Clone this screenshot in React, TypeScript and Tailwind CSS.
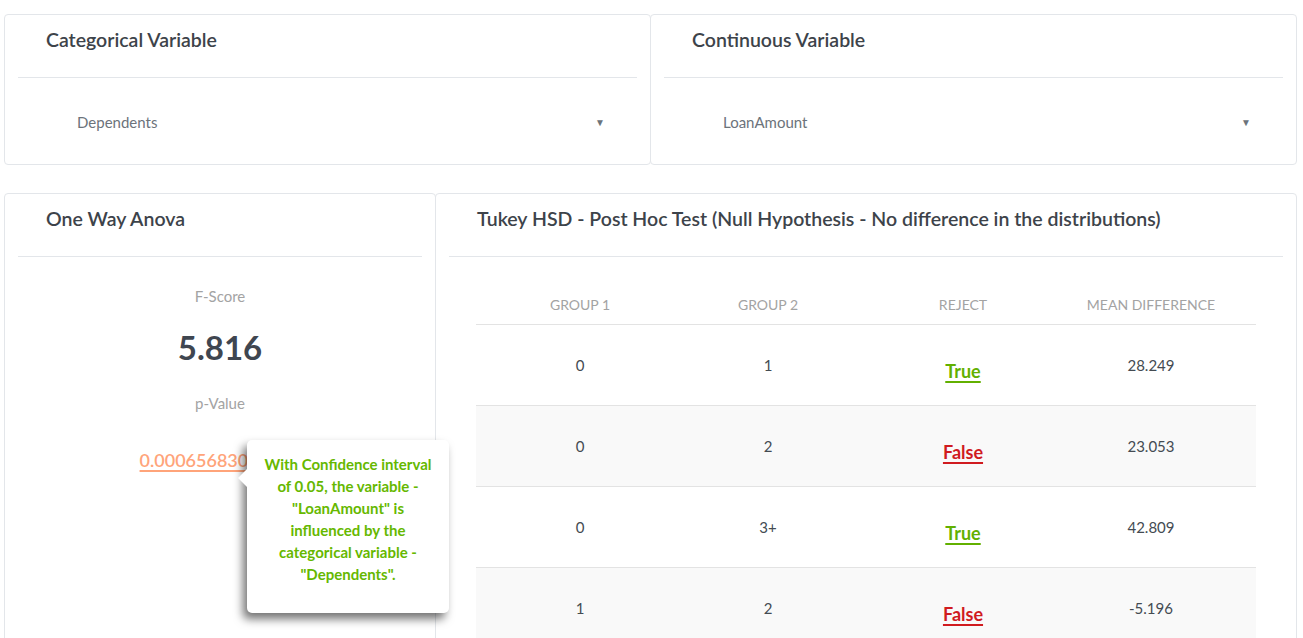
import React from 'react';

const rows = [
  { g1: '0', g2: '1', reject: true, diff: '28.249' },
  { g1: '0', g2: '2', reject: false, diff: '23.053' },
  { g1: '0', g2: '3+', reject: true, diff: '42.809' },
  { g1: '1', g2: '2', reject: false, diff: '-5.196' },
];

const cols = 'grid grid-cols-[208px_168px_222px_154px_1fr] items-center';

function CardHeader({ title }: { title: string }) {
  return (
    <div className="h-[63px] border-b border-[#e3e6ea] pt-[14px] pl-[28px]">
      <h3 className="text-[19.5px] leading-[22px] font-semibold text-[#3d434a]">{title}</h3>
    </div>
  );
}

function SelectCard({ title, value, className }: { title: string; value: string; className?: string }) {
  return (
    <div className={`h-[151px] rounded-[4px] border border-[#e3e6ea] bg-white px-[13px] ${className ?? ''}`}>
      <CardHeader title={title} />
      <div className="flex h-[86px] items-center justify-between pt-[2px] pl-[59px] pr-[32px]">
        <span className="text-[15px] text-[#6c737b]">{value}</span>
        <span className="text-[10px] text-[#6c737b]">▼</span>
      </div>
    </div>
  );
}

export default function App() {
  return (
    <div className="min-h-screen bg-white pl-[4px] pt-[14px] font-['Lato',sans-serif]">
      <div className="flex">
        <SelectCard title="Categorical Variable" value="Dependents" className="w-[647px]" />
        <SelectCard title="Continuous Variable" value="LoanAmount" className="-ml-px w-[647px]" />
      </div>

      <div className="mt-[28px] flex">
        {/* anova card */}
        <div className="relative h-[470px] w-[432px] rounded-[4px] border border-[#e3e6ea] bg-white px-[13px]">
          <CardHeader title="One Way Anova" />
          <div className="flex flex-col items-center pt-[28px] text-center">
            <div className="text-[15px] leading-[22px] text-[#a3a3a3]">F-Score</div>
            <div className="mt-[20px] text-[33px] leading-[40px] font-bold text-[#3f4650]">5.816</div>
            <div className="mt-[25px] text-[15px] leading-[22px] text-[#a3a3a3]">p-Value</div>
            <a className="mt-[34px] text-[18px] leading-[24px] font-semibold text-[#ffa47a] underline decoration-2 underline-offset-[3px]">
              0.00065683025986
            </a>
          </div>

          <div className="absolute left-[242px] top-[246px] w-[202px] rounded-[5px] bg-white px-[16px] pt-[13px] pb-[28px] text-center shadow-[-4px_6px_10px_rgba(0,0,0,0.55)]">
            <span className="absolute left-[-9px] top-[29px] h-0 w-0 border-y-[9px] border-r-[9px] border-y-transparent border-r-white" />
            <p className="text-[15px] leading-[22px] font-bold text-[#66b800]">
              With Confidence interval of 0.05, the variable - "LoanAmount" is influenced by the categorical variable - "Dependents".
            </p>
          </div>
        </div>

        {/* tukey card */}
        <div className="-ml-px h-[470px] w-[862px] rounded-[4px] border border-[#e3e6ea] bg-white px-[13px]">
          <CardHeader title="Tukey HSD - Post Hoc Test (Null Hypothesis - No difference in the distributions)" />
          <div className="px-[27px] pt-[28px]">
            <div className={`${cols} h-[40px] border-b border-[#e3e3e3] text-center text-[14px] text-[#a3a3a3]`}>
              <span>GROUP 1</span>
              <span>GROUP 2</span>
              <span>REJECT</span>
              <span>MEAN DIFFERENCE</span>
              <span />
            </div>
            {rows.map((r, i) => (
              <div
                key={i}
                className={`${cols} h-[81px] border-b border-[#e3e3e3] text-center text-[15px] text-[#444b52] ${i % 2 === 1 ? 'bg-[#f9f9f9]' : 'bg-white'}`}
              >
                <span>{r.g1}</span>
                <span>{r.g2}</span>
                <span className="pt-[12px]">
                  <a
                    className={`text-[18px] font-bold underline decoration-2 underline-offset-[3px] ${r.reject ? 'text-[#62b000]' : 'text-[#d01b1f]'}`}
                  >
                    {r.reject ? 'True' : 'False'}
                  </a>
                </span>
                <span>{r.diff}</span>
                <span />
              </div>
            ))}
          </div>
        </div>
      </div>
    </div>
  );
}
